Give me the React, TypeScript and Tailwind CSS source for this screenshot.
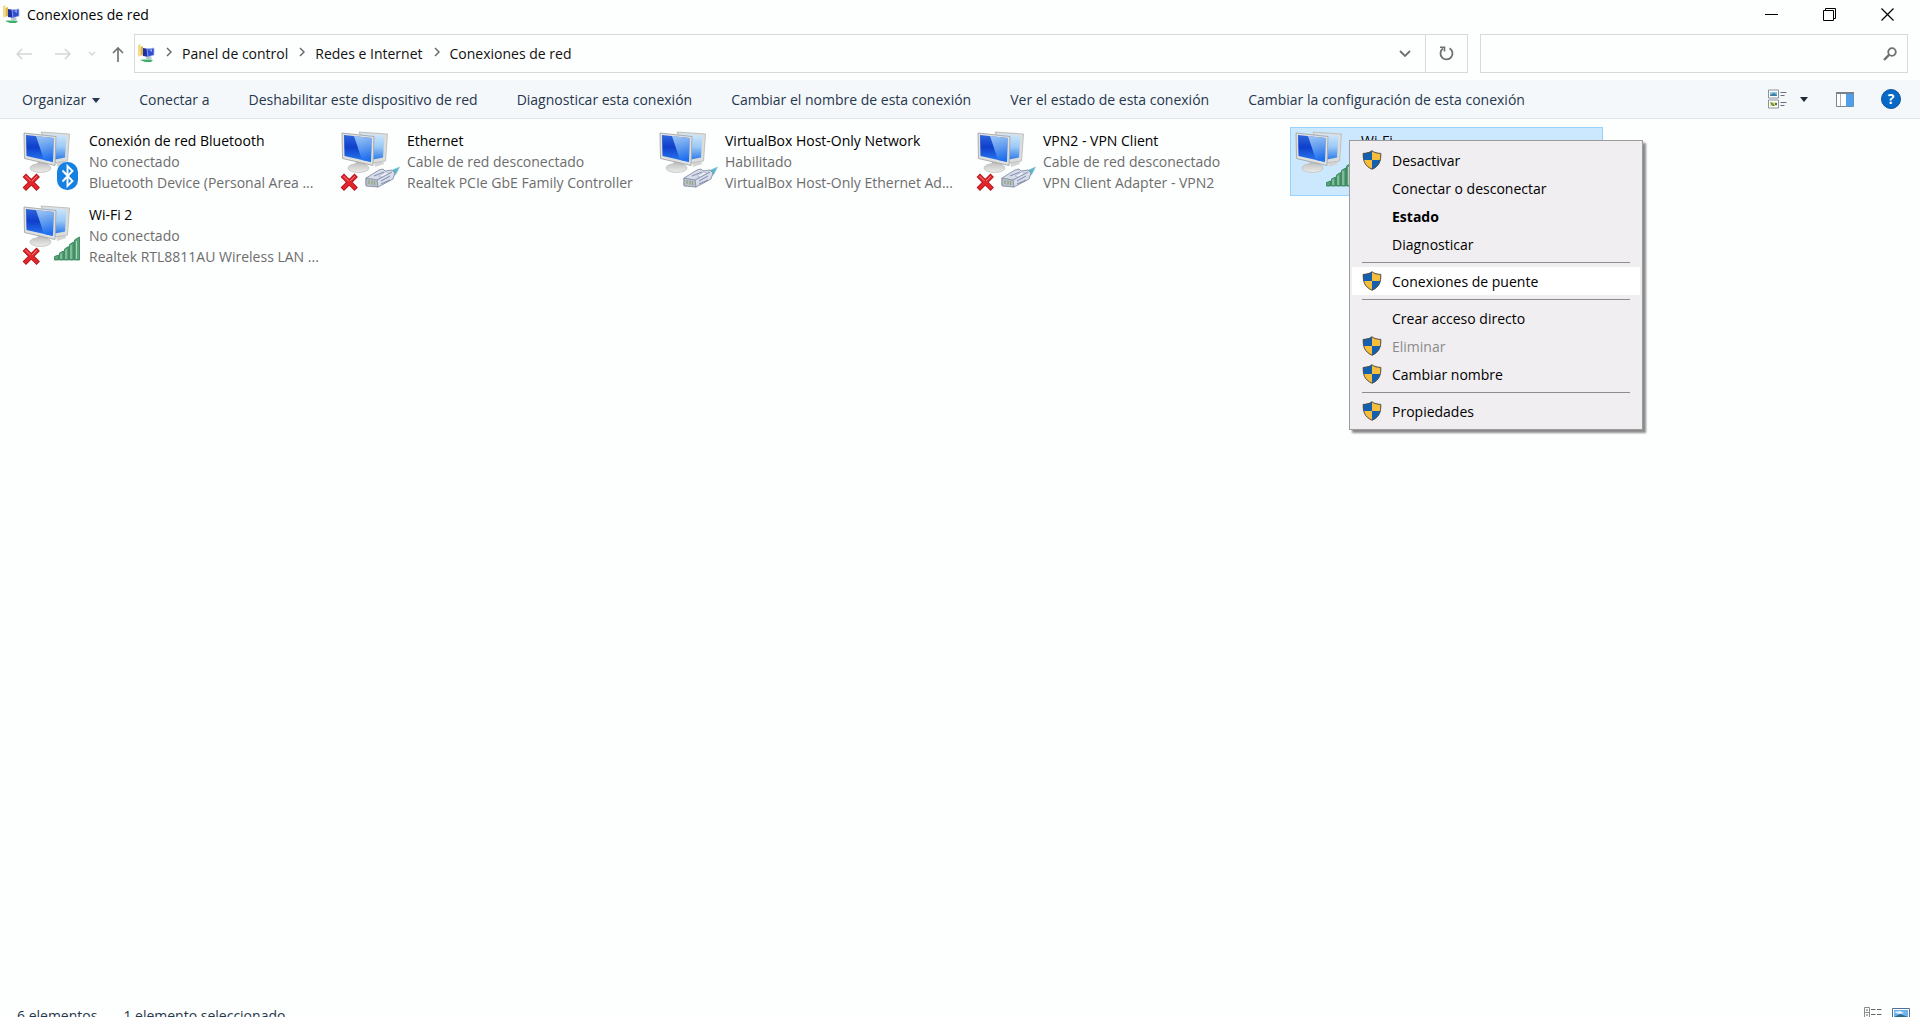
import React from 'react'

type Badge = 'bluetooth' | 'ethernet' | 'wifi'

type Connection = {
  name: string
  status?: string
  device?: string
  badge: Badge
  off?: boolean
  selected?: boolean
}

type MenuEntry = {
  label: string
  shield?: boolean
  bold?: boolean
  disabled?: boolean
  active?: boolean
}

const connections: Connection[] = [
  {
    name: 'Conexión de red Bluetooth',
    status: 'No conectado',
    device: 'Bluetooth Device (Personal Area ...',
    badge: 'bluetooth',
    off: true,
  },
  {
    name: 'Ethernet',
    status: 'Cable de red desconectado',
    device: 'Realtek PCIe GbE Family Controller',
    badge: 'ethernet',
    off: true,
  },
  {
    name: 'VirtualBox Host-Only Network',
    status: 'Habilitado',
    device: 'VirtualBox Host-Only Ethernet Ad...',
    badge: 'ethernet',
  },
  {
    name: 'VPN2 - VPN Client',
    status: 'Cable de red desconectado',
    device: 'VPN Client Adapter - VPN2',
    badge: 'ethernet',
    off: true,
  },
  { name: 'Wi-Fi', badge: 'wifi', selected: true },
  {
    name: 'Wi-Fi 2',
    status: 'No conectado',
    device: 'Realtek RTL8811AU Wireless LAN ...',
    badge: 'wifi',
    off: true,
  },
]

const commands = [
  'Conectar a',
  'Deshabilitar este dispositivo de red',
  'Diagnosticar esta conexión',
  'Cambiar el nombre de esta conexión',
  'Ver el estado de esta conexión',
  'Cambiar la configuración de esta conexión',
]

const crumbs = ['Panel de control', 'Redes e Internet', 'Conexiones de red']

const menuGroups: MenuEntry[][] = [
  [
    { label: 'Desactivar', shield: true },
    { label: 'Conectar o desconectar' },
    { label: 'Estado', bold: true },
    { label: 'Diagnosticar' },
  ],
  [{ label: 'Conexiones de puente', shield: true, active: true }],
  [
    { label: 'Crear acceso directo' },
    { label: 'Eliminar', shield: true, disabled: true },
    { label: 'Cambiar nombre', shield: true },
  ],
  [{ label: 'Propiedades', shield: true }],
]

const FolderIcon = () => (
  <svg width="18" height="19" viewBox="0 0 18 19" aria-hidden="true">
    <path d="M1 1l2.500-1v11l-2.500 2z" fill="#f3dc85" />
    <path d="M3.500 3l2.500-1v9l-2.500 1z" fill="#d9b64a" />
    <path d="M6 4l6 1v8l-6-1z" fill="#1c2fa8" />
    <path d="M10 5l7-1v7l-6 2z" fill="#2f4fd0" stroke="#a9b9e8" strokeWidth="0.8" />
    <path d="M12 6l3-1v3z" fill="#8ea9f2" />
    <path d="M9 13h5l1 2H9z" fill="#b9c6cf" />
    <path d="M3 16l6-1 7 1-2 2H8z" fill="#3fae68" />
    <path d="M6 15h5v1H6z" fill="#a6dcb8" />
  </svg>
)

const ShieldIcon = () => (
  <svg width="20" height="20" viewBox="0 0 20 20" aria-hidden="true">
    <path
      d="M10 .5C8 2.300 4.500 3.200 1 3.200c-.2 7.300 1.200 12.800 9 16.300 7.800-3.500 9.200-9 9-16.300C15.500 3.200 12 2.300 10 .5z"
      fill="#f7bd3c"
    />
    <path d="M10 .5C8 2.300 4.500 3.200 1 3.200 1 5.700 1.100 8 1.600 10H10z" fill="#1360b0" />
    <path d="M10 19.500V10h8.400c-1 4.200-3.400 7.300-8.400 9.500z" fill="#1360b0" />
    <path
      d="M10 .8C8 2.500 4.500 3.400 1.200 3.400c-.2 7.100 1.200 12.400 8.800 15.800 7.600-3.400 9-8.700 8.800-15.800C15.500 3.400 12 2.500 10 .8z"
      fill="none"
      stroke="#4d4f52"
      strokeWidth="1"
    />
  </svg>
)

const BluetoothBadge = () => (
  <g>
    <rect x="37" y="33" width="21" height="28" rx="10" fill="#1580e4" />
    <path
      d="M42.500 41.500l10 10.500-5 5V37l5 5-10 10.500"
      fill="none"
      stroke="#fff"
      strokeWidth="1.900"
      strokeLinejoin="miter"
    />
  </g>
)

const EthernetBadge = () => (
  <g strokeLinejoin="round">
    <path d="M50 43l11.500-5-3.500 7-5 4z" fill="#58b4cc" stroke="#8fc6d4" strokeWidth="0.600" />
    <path d="M28 49l13-8 4-1 2 2 7-1 3 3-2 6-15 8-2-1-10-1z" fill="#d6dce8" stroke="#8790a8" strokeWidth="0.900" />
    <path d="M28 49l11 2 1 7-12-1z" fill="#b9c1cf" stroke="#7f889c" strokeWidth="0.800" />
    <path d="M39 51l15-8M36 47l10-4M43 52l9-5M43 55l9-4" fill="none" stroke="#7582a8" strokeWidth="0.900" />
    <path d="M31 51v4M34 51.500v4M36.500 52v4" stroke="#8da672" strokeWidth="1.200" />
    <path d="M41 47l7-4 3 1-7 4z" fill="#f3f5f9" stroke="#98a1b8" strokeWidth="0.500" />
  </g>
)

const WifiBadge = () => (
  <g fill="#56a377" stroke="#2d7a52" strokeWidth="0.800">
    <path d="M34.500 53.500l4-1.500v5h-4z" />
    <path d="M39.500 50l4-2V57h-4z" />
    <path d="M44.500 46l4-2.500V57h-4z" />
    <path d="M49.500 41.500l4-2.500V57h-4z" />
    <path d="M54.500 37l5-3V57h-5z" />
    <path d="M41 50.500v5.500M46 46.500v9.500M51 42v14M56.500 38v18" stroke="#a9d6ba" strokeWidth="1" />
  </g>
)

const ConnectionIcon = ({ badge, off }: { badge: Badge; off?: boolean }) => (
  <svg width="64" height="64" viewBox="0 0 64 64" className="shrink-0" aria-hidden="true">
    <defs>
      <linearGradient id="screen" x1="0" y1="0" x2="0" y2="1">
        <stop offset="0" stopColor="#2f66dc" />
        <stop offset="0.450" stopColor="#0f3fcb" />
        <stop offset="1" stopColor="#2b7df2" />
      </linearGradient>
      <linearGradient id="glare" x1="0" y1="0" x2="0.200" y2="1">
        <stop offset="0" stopColor="#b5d9fa" />
        <stop offset="0.550" stopColor="#6aa9f5" />
        <stop offset="1" stopColor="#1f6ff0" />
      </linearGradient>
      <linearGradient id="backScreen" x1="0" y1="0" x2="0" y2="1">
        <stop offset="0" stopColor="#cfe7fb" />
        <stop offset="0.500" stopColor="#9cc9f6" />
        <stop offset="1" stopColor="#2f7bea" />
      </linearGradient>
      <linearGradient id="base" x1="0" y1="0" x2="0" y2="1">
        <stop offset="0" stopColor="#c4c5c3" />
        <stop offset="1" stopColor="#ececea" />
      </linearGradient>
    </defs>
    <path d="M36 33l9-1 1 3-9 3z" fill="#d4d5d3" />
    <path d="M21 3l28.500 2-2 27L34 34z" fill="#dcdedc" stroke="#b4b8ba" strokeWidth="0.800" />
    <path d="M23 5l23.500 1.500L45 28.500l-10 2z" fill="url(#backScreen)" />
    <path d="M18 32h9l1 6H17z" fill="#bdbebc" />
    <ellipse cx="20.500" cy="39" rx="10.500" ry="4.500" fill="url(#base)" stroke="#bcbdbb" strokeWidth="0.700" />
    <path d="M4 4l32 3.500L35 36.500 4.500 29.500z" fill="#e0e1df" stroke="#a3a7aa" strokeWidth="0.900" />
    <path d="M6 6l27.500 3L33 33 6.500 27z" fill="url(#screen)" />
    <path d="M16 7.100L33.500 9 33 33l-9-2z" fill="url(#glare)" opacity="0.850" />
    {badge === 'bluetooth' && <BluetoothBadge />}
    {badge === 'ethernet' && <EthernetBadge />}
    {badge === 'wifi' && <WifiBadge />}
    {off && (
      <g fill="none" strokeLinecap="square">
        <path d="M6 48l10.500 10.500M16.500 48L6 58.500" stroke="#b01218" strokeWidth="4.800" />
        <path d="M6 48l10.500 10.500M16.500 48L6 58.500" stroke="#e3262b" strokeWidth="3.200" />
        <path d="M6 47.500l4 4M16.500 47.500l-4 4" stroke="#f08a8a" strokeWidth="1" />
      </g>
    )}
  </svg>
)

const Chevron = () => (
  <svg width="6" height="10" viewBox="0 0 6 10" className="mb-1" aria-hidden="true">
    <path d="M1 1l4 4-4 4" fill="none" stroke="#6b6b6b" strokeWidth="1.500" />
  </svg>
)

const TitleBar = () => (
  <header className="flex h-[29px] items-center pl-[2px] pr-1">
    <FolderIcon />
    <h1 className="ml-[7px] flex-1 text-black">Conexiones de red</h1>
    <button aria-label="Minimizar" className="flex h-full w-[58px] items-center justify-center">
      <svg width="13" height="13" viewBox="0 0 13 13">
        <path d="M0 6.500h13" stroke="#000" />
      </svg>
    </button>
    <button aria-label="Restaurar" className="flex h-full w-[58px] items-center justify-center">
      <svg width="13" height="13" viewBox="0 0 13 13" fill="none" stroke="#000">
        <path d="M0.500 2.500h10v10h-10zM2.500 2.500v-2h10v10h-2" />
      </svg>
    </button>
    <button aria-label="Cerrar" className="flex h-full w-[58px] items-center justify-center">
      <svg width="13" height="13" viewBox="0 0 13 13">
        <path d="M0.500 0.500l12 12M12.500 0.500l-12 12" stroke="#000" strokeWidth="1.200" />
      </svg>
    </button>
  </header>
)

const AddressRow = () => (
  <div className="mt-[5px] flex h-[39px] pl-4 pr-3">
    <div className="flex w-[118px] shrink-0 items-center">
      <button aria-label="Atrás">
        <svg width="16" height="12" viewBox="0 0 16 12" fill="none" stroke="#d3d5d8" strokeWidth="1.500">
          <path d="M16 6H1M6 1L1 6l5 5" />
        </svg>
      </button>
      <button aria-label="Adelante" className="ml-[23px]">
        <svg width="16" height="12" viewBox="0 0 16 12" fill="none" stroke="#d3d5d8" strokeWidth="1.500">
          <path d="M0 6h15M10 1l5 5-5 5" />
        </svg>
      </button>
      <button aria-label="Ubicaciones recientes" className="ml-[17px]">
        <svg width="8" height="6" viewBox="0 0 8 6" fill="none" stroke="#d3d5d8" strokeWidth="1.400">
          <path d="M1 1l3 3 3-3" />
        </svg>
      </button>
      <button aria-label="Subir" className="ml-4">
        <svg width="12" height="16" viewBox="0 0 12 16" fill="none" stroke="#747474" strokeWidth="1.700">
          <path d="M6 16V2M1 7l5-5 5 5" />
        </svg>
      </button>
    </div>
    <nav className="flex min-w-0 flex-1 items-center border border-[#d9d9d9] pl-[2px] text-[#111]">
      <FolderIcon />
      <ol className="flex flex-1 items-center">
        {crumbs.map((crumb) => (
          <li key={crumb} className="flex items-center">
            <span className="ml-[11px] mr-[10px]">
              <Chevron />
            </span>
            <button>{crumb}</button>
          </li>
        ))}
      </ol>
      <button aria-label="Ubicaciones anteriores" className="flex h-full w-10 items-center justify-center">
        <svg width="12" height="8" viewBox="0 0 12 8" fill="none" stroke="#6f6f6f" strokeWidth="1.800">
          <path d="M1 1l5 5 5-5" />
        </svg>
      </button>
      <button
        aria-label="Actualizar"
        className="flex h-full w-[42px] items-center justify-center border-l border-[#d9d9d9]"
      >
        <svg width="15" height="15" viewBox="0 0 15 15" fill="none" stroke="#6f6f6f" strokeWidth="1.800">
          <path d="M10.500 2.200A6 6 0 1 1 4 2.500" />
          <path d="M1 1.200h4.500v4.300" strokeWidth="1.600" />
        </svg>
      </button>
    </nav>
    <label className="ml-3 flex w-[428px] items-center border border-[#d9d9d9] pr-[10px]">
      <input aria-label="Buscar" className="h-full min-w-0 flex-1 px-2 outline-none" />
      <svg width="14" height="14" viewBox="0 0 14 14" fill="none" stroke="#6f6f6f" aria-hidden="true">
        <circle cx="9" cy="5" r="3.800" strokeWidth="1.800" />
        <path d="M6.300 7.700L1 13" strokeWidth="2.400" />
      </svg>
    </label>
  </div>
)

const CommandBar = () => (
  <div className="mt-[7px] flex h-[39px] items-center border-b border-[#dfe5ea] bg-[#f5f8fb] pl-[22px] pr-[19px] text-[#26374d]">
    <div className="flex flex-1 items-center gap-[39px] whitespace-nowrap pt-[2px]">
      <button className="flex items-center gap-[6px]">
        Organizar
        <svg width="8" height="5" viewBox="0 0 8 5" fill="#26374d" aria-hidden="true">
          <path d="M0 0h8L4 5z" />
        </svg>
      </button>
      {commands.map((command) => (
        <button key={command}>{command}</button>
      ))}
    </div>
    <button aria-label="Cambiar la vista">
      <svg width="19" height="20" viewBox="0 0 19 20" fill="none">
        <path d="M0.500 1h10v8h-10zM0.500 11h10v8h-10z" fill="#fff" stroke="#8b9299" />
        <path d="M2 3h7v4H2z" fill="#8fc4e4" />
        <path d="M2 6l4-2 3 2v1H2z" fill="#3c7fa3" />
        <path d="M2 13h7v4H2z" fill="#dfe6a8" />
        <path d="M2 13l3 1 2 3H4z" fill="#6f9a28" />
        <path d="M7 14h2v2H7z" fill="#4d7050" />
        <path d="M12.500 3.500h6M12.500 6.500h4M12.500 13.500h6M12.500 16.500h4" stroke="#66707a" />
      </svg>
    </button>
    <button aria-label="Más opciones" className="ml-[13px]">
      <svg width="8" height="5" viewBox="0 0 8 5" fill="#1f2a36">
        <path d="M0 0h8L4 5z" />
      </svg>
    </button>
    <button aria-label="Panel de vista previa" className="ml-[28px]">
      <svg width="18" height="15" viewBox="0 0 18 15">
        <path d="M0.500 0.500h17v14H0.500z" fill="#fff" stroke="#7d8790" />
        <path d="M4.500 1v13" stroke="#a9b1b8" />
        <path d="M10 1h7.500v13.500H10z" fill="#4f9fea" />
        <path d="M0 1h18" stroke="#76828d" strokeWidth="2" />
      </svg>
    </button>
    <button
      aria-label="Ayuda"
      className="ml-[27px] flex size-5 items-center justify-center rounded-full border border-[#0a55a0] bg-[#0768c6] text-sm font-bold text-white"
    >
      ?
    </button>
  </div>
)

const ContextMenu = () => (
  <div
    role="menu"
    className="absolute left-[58px] top-[12px] z-10 w-[294px] border border-[#9b9b9b] bg-[#f0eef0] px-[2px] pb-1 pt-[5px] shadow-[3px_3px_2px_rgba(0,0,0,0.45)]"
  >
    {menuGroups.map((group, i) => (
      <div key={group[0].label}>
        {i > 0 && <hr className="mx-[10px] my-1 border-[#8c8c8c]" />}
        {group.map((entry) => (
          <button
            key={entry.label}
            role="menuitem"
            disabled={entry.disabled}
            className={`flex h-7 w-full items-center pl-[10px] text-left ${
              entry.active ? 'bg-white' : ''
            } ${entry.bold ? 'font-bold' : ''} ${entry.disabled ? 'text-[#8b8b8b]' : 'text-black'}`}
          >
            <span className="mr-[10px] size-5">{entry.shield && <ShieldIcon />}</span>
            <span className="pt-[2px]">{entry.label}</span>
          </button>
        ))}
      </div>
    ))}
  </div>
)

const ConnectionTile = ({ item }: { item: Connection }) => (
  <li
    className={`relative flex h-[69px] border pl-px pt-px ${
      item.selected ? 'border-[#99d1ff] bg-[#cce8ff]' : 'border-transparent'
    }`}
  >
    <ConnectionIcon badge={item.badge} off={item.off} />
    <div className="ml-[5px] mt-px whitespace-nowrap leading-[21px] text-[#6d6d6d]">
      <p className="text-black">{item.name}</p>
      <p>{item.status}</p>
      <p>{item.device}</p>
    </div>
    {item.selected && <ContextMenu />}
  </li>
)

const StatusBar = () => (
  <footer className="flex h-4 items-start overflow-hidden pl-[17px] pr-[10px] leading-[30px] text-[#26374d]">
    <span>6 elementos</span>
    <span className="ml-[26px] flex-1">1 elemento seleccionado</span>
    <button aria-label="Detalles" className="mt-[6px]">
      <svg width="18" height="16" viewBox="0 0 18 16" fill="none" stroke="#8a8a8a">
        <path d="M0.500 0.500h5v5h-5zM0.500 5.500h5v5h-5z" />
        <path d="M2.500 3h1M2.500 8h1" stroke="#333" strokeWidth="1.500" />
        <path d="M7 2.500h4.500M13 2.500h4.500M7 7.500h4.500M13 7.500h4.500" stroke="#666" />
      </svg>
    </button>
    <button aria-label="Iconos grandes" className="ml-[10px] mt-[7px]">
      <svg width="18" height="15" viewBox="0 0 18 15">
        <path d="M0.500 0.500h17v14H0.500z" fill="#fff" stroke="#4e6f9c" />
        <path d="M2 2h14v11H2z" fill="#6fb2ee" />
        <path d="M2 4l6-1 4 2-5 1z" fill="#e8f4fd" />
        <path d="M2 9l6-3 8 3v4H2z" fill="#2f6a8a" />
      </svg>
    </button>
  </footer>
)

const App = () => {
  return (
    <div className="flex h-screen flex-col overflow-hidden bg-[#fdfefe] font-['Open_Sans','Noto_Sans',sans-serif] text-sm">
      <TitleBar />
      <AddressRow />
      <CommandBar />
      <main className="min-h-0 flex-1 pl-[18px] pt-2">
        <ul className="grid grid-cols-[repeat(auto-fill,313px)] gap-[5px]">
          {connections.map((item) => (
            <ConnectionTile key={item.name} item={item} />
          ))}
        </ul>
      </main>
      <StatusBar />
    </div>
  )
}

export default App
